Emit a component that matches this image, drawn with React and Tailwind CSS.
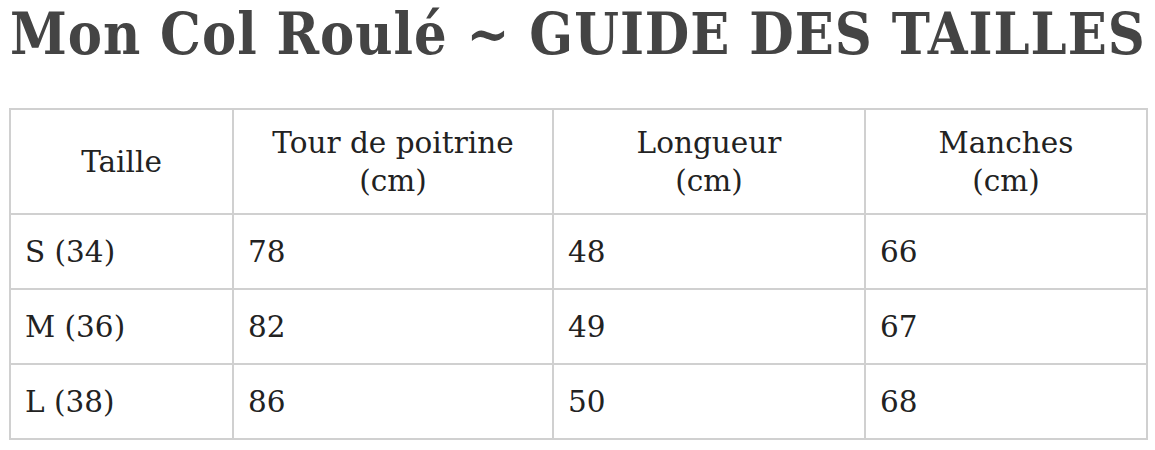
import React from 'react';

const rows = [
  ['S (34)', '78', '48', '66'],
  ['M (36)', '82', '49', '67'],
  ['L (38)', '86', '50', '68'],
];

const cell = 'border-2 border-[#d0d0d0] align-middle';

export default function App() {
  return (
    <div className="w-[1155px] h-[450px] bg-white overflow-hidden">
      <h1 className="pl-[10px] pt-[1px] text-[57px] leading-[66px] tracking-[1px] font-bold text-[#444] whitespace-nowrap font-['DejaVu_Serif_Condensed','DejaVu_Serif',serif]">
        Mon Col Roulé ~ GUIDE DES TAILLES
      </h1>
      <table className="ml-[9px] mt-[41px] w-[1137px] border-collapse table-fixed text-[#222] text-[29.5px] leading-[38px] font-['DejaVu_Serif',serif]">
        <colgroup>
          <col className="w-[223px]" />
          <col className="w-[320px]" />
          <col className="w-[312px]" />
          <col className="w-[282px]" />
        </colgroup>
        <thead>
          <tr className="h-[105px]">
            <th className={`${cell} font-normal text-center`}>Taille</th>
            <th className={`${cell} font-normal text-center`}>Tour de poitrine<br />(cm)</th>
            <th className={`${cell} font-normal text-center`}>Longueur<br />(cm)</th>
            <th className={`${cell} font-normal text-center`}>Manches<br />(cm)</th>
          </tr>
        </thead>
        <tbody>
          {rows.map((r) => (
            <tr key={r[0]} className="h-[75px]">
              {r.map((c, i) => (
                <td key={i} className={`${cell} px-[14px]`}>{c}</td>
              ))}
            </tr>
          ))}
        </tbody>
      </table>
    </div>
  );
}
